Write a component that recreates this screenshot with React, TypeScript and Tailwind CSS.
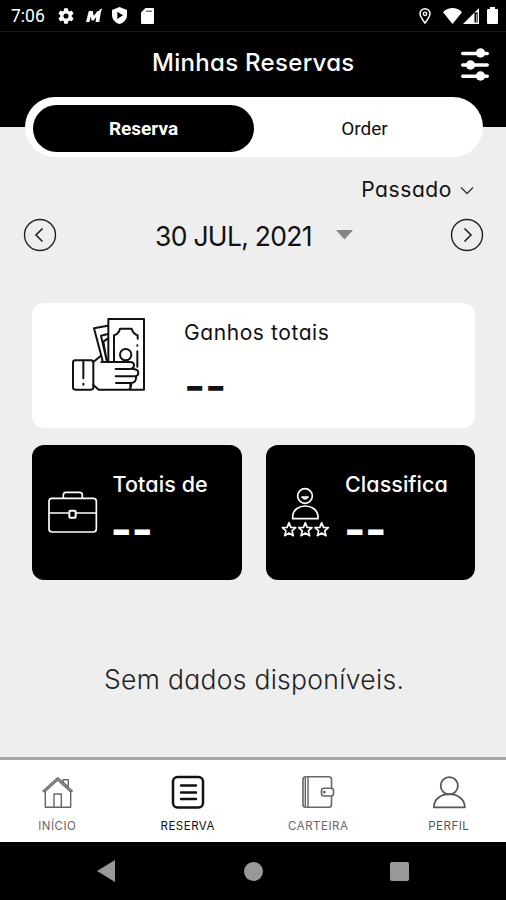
import type { ReactNode } from "react";

const geo = "font-['Inter','Noto_Sans',sans-serif] [font-feature-settings:'cv11'] whitespace-nowrap";

function StatusBar() {
  return (
    <div className="flex h-8 items-center border-b border-[#181818] pl-[11px] pr-[8px] text-white">
      <span className="w-[47px] pt-[2px] font-[Roboto,sans-serif] text-[17.5px] leading-none">7:06</span>
      <svg className="h-4 w-4" viewBox="2 2 20 20" fill="#fff">
        <path fillRule="evenodd" d="M19.14 12.94c.04-.3.06-.61.06-.94 0-.32-.02-.64-.07-.94l2.03-1.58c.18-.14.23-.41.12-.61l-1.92-3.32c-.12-.22-.37-.29-.59-.22l-2.39.96c-.5-.38-1.03-.7-1.62-.94L14.4 2.81c-.04-.24-.24-.41-.48-.41h-3.84c-.24 0-.43.17-.47.41l-.36 2.54c-.59.24-1.13.57-1.62.94l-2.39-.96c-.22-.08-.47 0-.59.22L2.74 8.87c-.12.21-.08.47.12.61l2.03 1.58c-.05.3-.09.63-.09.94s.02.64.07.94l-2.03 1.58c-.18.14-.23.41-.12.61l1.92 3.32c.12.22.37.29.59.22l2.39-.96c.5.38 1.03.7 1.62.94l.36 2.54c.05.24.24.41.48.41h3.84c.24 0 .44-.17.47-.41l.36-2.54c.59-.24 1.13-.56 1.62-.94l2.39.96c.22.08.47 0 .59-.22l1.92-3.32c.12-.22.07-.47-.12-.61l-2.01-1.58zM12 15.2a3.2 3.2 0 1 1 0-6.4 3.2 3.2 0 0 1 0 6.4z" />
      </svg>
      <svg className="ml-[12px] h-4 w-[16px]" viewBox="0 0 16 16" fill="#fff">
        <path d="M0 14 2.800 3h4l1 5 3.700-5H15L13.300 14H9.600l.6-5-2.700 3.600H5.600L4.600 8.500 3.500 14z" />
        <path d="m13 2 3-1.800-1 4z" />
      </svg>
      <svg className="ml-[10px] h-[17px] w-[15px]" viewBox="0 0 15 17">
        <path fill="#fff" d="M7.500 0 15 3v5c0 4.300-3 7.700-7.500 9C3 15.700 0 12.300 0 8V3z" />
        <path fill="#000" d="M5.300 4.700v7.200L11 8.300z" />
      </svg>
      <svg className="ml-[14px] h-4 w-[13px]" viewBox="0 0 13 16">
        <path fill="#fff" d="M4.500 0H12q1 0 1 1v14q0 1-1 1H1q-1 0-1-1V4.500z" />
        <path stroke="#555" strokeWidth="1.200" d="M5 3.200h6" />
      </svg>
      <div className="flex-1" />
      <svg className="h-4 w-3" viewBox="0 0 12 16" fill="none" stroke="#fff">
        <path strokeWidth="1.500" d="M6 15C3 11 1 8.500 1 5.800a5 5 0 0 1 10 0C11 8.500 9 11 6 15z" />
        <circle cx="6" cy="5.800" r="1.700" strokeWidth="1.400" />
      </svg>
      <svg className="ml-3 h-4 w-[19px]" viewBox="0 0 19 16">
        <path fill="#fff" d="M9.500 16 0 4.200C5.500-1.300 13.500-1.300 19 4.200z" />
      </svg>
      <svg className="ml-px h-4 w-4" viewBox="0 0 16 16">
        <path fill="#fff" fillRule="evenodd" d="M16 0v16H0zM14.700 4.500h-3.200v10h3.200z" />
        <path stroke="#999" strokeWidth="1.200" d="M13.600 6v8" />
      </svg>
      <svg className="ml-[8px] h-[17px] w-[11px]" viewBox="0 0 11 17" fill="#fff">
        <path d="M3 0h5v2h2q1 0 1 1v13q0 1-1 1H1q-1 0-1-1V3q0-1 1-1h2z" />
      </svg>
    </div>
  );
}

function Header() {
  return (
    <div className="flex h-[95px] items-start pr-4">
      <div className={`${geo} flex-1 pl-[152px] pt-[17px] text-[24px] leading-[28px] font-medium tracking-[0.300px] text-white`}>Minhas Reservas</div>
      <svg className="mt-[15px] h-[34px] w-[30px]" viewBox="0 0 30 34" stroke="#fff" fill="#fff">
        <path strokeWidth="3.600" strokeLinecap="round" d="M2.800 6.500h24.400M2.800 18h24.400M2.800 29.300h24.400" />
        <g stroke="none">
          <circle cx="20.500" cy="6" r="4.700" />
          <circle cx="10.500" cy="18" r="4.700" />
          <circle cx="20.500" cy="29" r="4.700" />
        </g>
      </svg>
    </div>
  );
}

function RoundArrow({ d }: { d: string }) {
  return (
    <svg className="h-[34px] w-[34px]" viewBox="0 0 34 34" fill="none" stroke="#222">
      <circle cx="17" cy="17" r="15.500" strokeWidth="1.400" />
      <path strokeWidth="1.600" d={d} />
    </svg>
  );
}

function MoneyIcon() {
  return (
    <svg className="h-[73px] w-[73px]" viewBox="156 84 219 219" fill="none" stroke="#111" strokeWidth="6" strokeLinejoin="round" strokeLinecap="round">
      <path d="M331 299h41V87H265v127M263 107l-41 8 26 98M263 132l-20 5 17 74M263 146l-13 9 8 45" />
      <path d="M282 212v-76q14-4 18-20h35q4 15 18 20v10M352 166v1M352 184v46" />
      <circle cx="317" cy="194" r="17" />
      <rect x="159" y="211" width="61" height="88" rx="7" />
      <path d="M190 213v52M190 281v3M220 216l22-18M220 285l16 14h88q10 0 10-19M244 216h86q12 0 12 10t-12 11h-43M337 237q18 0 18 11t-14 11h-54M348 259q2 19-14 20h-46M331 282v17" />
    </svg>
  );
}

function BriefcaseIcon() {
  return (
    <svg className="mt-[4px] h-[42px] w-[50px]" viewBox="83 167 150 126" fill="none" stroke="#fff" strokeWidth="5">
      <rect x="86" y="189" width="142" height="101" rx="9" />
      <path d="M129 189v-10q0-8 8-8h41q8 0 8 8v10M87 233h58M167 233h61" />
      <rect x="147" y="226" width="19" height="21" rx="3" strokeWidth="6" />
    </svg>
  );
}

function RatingIcon() {
  const star = "M0-21 5.500-7 20-6 9 3.500 13 18 0 10-13 18-9 3.500-20-6-5.500-7z";
  return (
    <svg className="h-[50px] w-[50px]" viewBox="78 154 150 150" fill="none" stroke="#fff" strokeWidth="5" strokeLinejoin="round">
      <circle cx="150" cy="181" r="22" />
      <path d="M141 184q9 11 18 0zM113 249v-8c4-40 71-40 76 0v8z" />
      <path transform="translate(102 282)" d={star} />
      <path transform="translate(151 282)" d={star} />
      <path transform="translate(200 282)" d={star} />
    </svg>
  );
}

function DarkCard({ icon, label, labelClass }: { icon: ReactNode; label: string; labelClass: string }) {
  return (
    <div className="flex h-[135px] w-[209.500px] rounded-[12px] bg-black pl-[15.500px] text-white">
      <div className="w-[65px] pt-[42px]">{icon}</div>
      <div>
        <div className={`${geo} ${labelClass} pt-[25px] text-[21.500px] leading-[28px] font-medium`}>{label}</div>
        <div className={`${geo} -ml-[2px] mt-[11px] text-[46px] leading-[40px] font-bold tracking-[-0.500px]`}>--</div>
      </div>
    </div>
  );
}

function Tab({ children, label, className }: { children: ReactNode; label: string; className: string }) {
  return (
    <div className={`flex flex-1 flex-col items-center ${className}`}>
      <svg className="mt-[15px] h-[34px] w-[34px]" viewBox="0 0 34 34" fill="none" stroke="currentColor" strokeWidth="1.400" strokeLinejoin="round">
        {children}
      </svg>
      <span className={`${geo} mt-[9px] text-[11.500px] leading-[16px] tracking-[0.500px]`}>{label}</span>
    </div>
  );
}

export default function App() {
  return (
    <div className="flex h-[900px] w-[506px] flex-col overflow-hidden bg-[#eeeeee]">
      <div className="h-[127px] shrink-0 bg-black">
        <StatusBar />
        <Header />
      </div>
      <div className="relative mx-auto -mt-[30px] flex h-[60px] w-[458px] translate-x-px shrink-0 rounded-full bg-white p-[8px] font-[Roboto,sans-serif] text-[19px]">
        <div className="flex h-[47px] w-[221px] items-center justify-center rounded-full bg-black pt-[2px] font-bold text-white">Reserva</div>
        <div className="flex h-[47px] flex-1 items-center justify-center pt-[2px] text-[#111]">Order</div>
      </div>
      <div className="flex h-[61px] items-start justify-end pr-[32px] pt-[19px] text-[#111]">
        <span className={`${geo} text-[21px] leading-[28px] tracking-[0.600px]`}>Passado</span>
        <svg className="mt-[10px] ml-[8px] h-[10px] w-[14px]" viewBox="0 0 14 10" fill="none" stroke="#333" strokeWidth="1.300">
          <path d="m1 1.500 6 6 6-6" />
        </svg>
      </div>
      <div className="flex h-[34px] items-center pl-[23px] pr-[22px] text-[#111]">
        <RoundArrow d="m19.500 10.500-6.500 6.500 6.500 6.500" />
        <span className={`${geo} ml-[98px] w-[181px] pt-[2px] text-[26.500px] leading-[34px] tracking-[-0.700px]`}>30 JUL, 2021</span>
        <svg className="h-[10px] w-[17px]" viewBox="0 0 17 10" fill="#858585">
          <path d="M0 0h17L8.500 9.500z" />
        </svg>
        <div className="flex-1" />
        <RoundArrow d="m14.500 10.500 6.500 6.500-6.500 6.500" />
      </div>
      <div className="mt-[51px] ml-[32px] flex h-[125px] w-[443px] shrink-0 rounded-[12px] bg-white pl-[40px] pt-[15px] text-[#111]">
        <MoneyIcon />
        <div className="ml-[39px]">
          <div className={`${geo} pt-px text-[21px] leading-[28px] tracking-[0.580px]`}>Ganhos totais</div>
          <div className={`${geo} mt-[18px] text-[46px] leading-[40px] font-semibold tracking-[-0.500px]`}>--</div>
        </div>
      </div>
      <div className="mt-[17px] ml-[32px] flex w-[443px] shrink-0 justify-between">
        <DarkCard icon={<BriefcaseIcon />} label="Totais de" labelClass="tracking-[0.100px]" />
        <DarkCard icon={<RatingIcon />} label="Classifica" labelClass="-ml-px tracking-[0.050px]" />
      </div>
      <div className={`${geo} mt-[80px] pl-[104px] text-[26.500px] leading-[38px] font-light tracking-[0.300px] text-[#222]`}>Sem dados disponíveis.</div>
      <div className="-mx-[8px] mt-auto flex h-[85px] shrink-0 border-t-[3px] border-[#a8a8a8] bg-white">
        <Tab label="INÍCIO" className="text-[#666]">
          <path d="M3 16 17.700 2.700 32.300 16l-1.500 1L17.700 5 4.500 17zM5.300 16.500V32.300h25.400V16.500M14 32.300V19h7.300v13.300M23 7V4.800h5.300v7.400z" />
        </Tab>
        <Tab label="RESERVA" className="text-[#111]">
          <rect x="2" y="2" width="30" height="30.500" rx="4.500" strokeWidth="2.500" />
          <path strokeWidth="2.400" strokeLinecap="round" d="M10 10.500h15M10 17.500h15M10 24h15" />
        </Tab>
        <Tab label="CARTEIRA" className="text-[#666]">
          <path d="M30.500 13V4.500q0-2.800-2.800-2.800H4.800Q2 1.700 2 4.500v25q0 2.800 2.800 2.800h22.900q2.800 0 2.800-2.800V21" strokeWidth="1.600" />
          <path d="M4.300 2.500v29M7 2v30" />
          <rect x="20.500" y="13.300" width="12" height="7.700" rx="2.500" strokeWidth="1.600" />
          <circle cx="23.300" cy="17.200" r=".7" />
        </Tab>
        <Tab label="PERFIL" className="text-[#555]">
          <circle cx="17.300" cy="10.700" r="8.600" strokeWidth="1.800" />
          <path strokeWidth="1.800" d="M1.800 32.300c0-17.500 31-17.500 31 0z" />
        </Tab>
      </div>
      <div className="flex h-[58px] shrink-0 items-center bg-black">
        <svg className="ml-[97px] h-[22px] w-[18px]" viewBox="0 0 18 22" fill="#999"><path d="M18 0v22L0 11z" /></svg>
        <div className="ml-[129px] h-[19px] w-[19px] rounded-full bg-[#999]" />
        <div className="ml-[127px] h-[19px] w-[19px] rounded-[2px] bg-[#999]" />
      </div>
    </div>
  );
}
